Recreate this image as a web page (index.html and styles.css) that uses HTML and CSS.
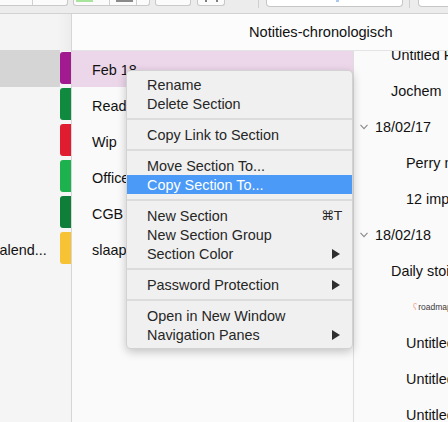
FILE: index.html
```html
<!DOCTYPE html>
<html>
<head>
<meta charset="utf-8">
<link rel="stylesheet" href="styles.css">
</head>
<body>
<div class="window">
  <div class="toolbar">
    <div class="tb-btn b1"><span class="seg s1a"></span><span class="seg s1b"></span></div>
    <div class="tb-btn b2"><span class="seg s2a"><i class="green"></i></span><span class="seg s2b"><i class="grey"></i></span><span class="seg s2c"></span></div>
    <div class="tb-btn b3"></div>
    <div class="tb-btn b4"><i class="dot"></i><i class="dot"></i></div>
    <div class="tb-line l1"></div>
    <div class="tb-field f1"><i class="blue"></i></div>
    <div class="tb-line l2"></div>
    <div class="tb-field f2"></div>
  </div>
  <div class="main">
    <aside class="nav">
      <div class="nav-head"></div>
      <div class="nav-row"><span class="nav-label selected"></span><span class="tab t-magenta"></span></div>
      <div class="nav-row"><span class="nav-label"></span><span class="tab t-green"></span></div>
      <div class="nav-row"><span class="nav-label"></span><span class="tab t-red"></span></div>
      <div class="nav-row"><span class="nav-label"></span><span class="tab t-lime"></span></div>
      <div class="nav-row"><span class="nav-label"></span><span class="tab t-dark"></span></div>
      <div class="nav-row"><span class="nav-label"><span class="nb-name">Kalend...</span></span><span class="tab t-yellow"></span></div>
    </aside>
    <div class="content">
      <div class="title-bar"><span class="title">Notities-chronologisch</span></div>
      <div class="panes">
        <div class="sections">
          <div class="sec-row selected">Feb 18</div>
          <div class="sec-row">Read</div>
          <div class="sec-row">Wip</div>
          <div class="sec-row">Office</div>
          <div class="sec-row">CGB</div>
          <div class="sec-row">slaap</div>
        </div>
        <div class="pages">
          <div class="page-list">
            <div class="page lv1">Untitled Page</div>
            <div class="page lv1">Jochem</div>
            <div class="page grp"><svg class="chev" width="8" height="6" viewBox="0 0 8 6"><path d="M0.5 0.8 L4 4.6 L7.5 0.8" fill="none" stroke="#8a8a8a" stroke-width="1.1"/></svg>18/02/17</div>
            <div class="page lv2">Perry meeting</div>
            <div class="page lv2">12 important things</div>
            <div class="page grp"><svg class="chev" width="8" height="6" viewBox="0 0 8 6"><path d="M0.5 0.8 L4 4.6 L7.5 0.8" fill="none" stroke="#8a8a8a" stroke-width="1.1"/></svg>18/02/18</div>
            <div class="page lv1">Daily stoic</div>
            <div class="page lv3"><span class="mark">ʕ</span>roadmap</div>
            <div class="page lv2">Untitled Page</div>
            <div class="page lv2">Untitled Page</div>
            <div class="page lv2">Untitled Page</div>
          </div>
        </div>
      </div>
    </div>
  </div>

  <div class="menu">
    <div class="item">Rename</div>
    <div class="item">Delete Section</div>
    <div class="sep"></div>
    <div class="item">Copy Link to Section</div>
    <div class="sep"></div>
    <div class="item">Move Section To...</div>
    <div class="item active">Copy Section To...</div>
    <div class="sep"></div>
    <div class="item">New Section<span class="key">⌘T</span></div>
    <div class="item">New Section Group</div>
    <div class="item">Section Color<svg class="arrow" width="8" height="10" viewBox="0 0 8 10"><path d="M0 0 L8 5 L0 10 Z" fill="#2e2e2e"/></svg></div>
    <div class="sep"></div>
    <div class="item">Password Protection<svg class="arrow" width="8" height="10" viewBox="0 0 8 10"><path d="M0 0 L8 5 L0 10 Z" fill="#2e2e2e"/></svg></div>
    <div class="sep"></div>
    <div class="item">Open in New Window</div>
    <div class="item">Navigation Panes<svg class="arrow" width="8" height="10" viewBox="0 0 8 10"><path d="M0 0 L8 5 L0 10 Z" fill="#2e2e2e"/></svg></div>
  </div>
</div>
</body>
</html>
```

FILE: styles.css
```css
* { box-sizing: border-box; }
html, body {
  margin: 0;
  padding: 0;
}
body {
  width: 448px;
  height: 422px;
  overflow: hidden;
  font-family: "Liberation Sans", Arial, sans-serif;
  font-size: 14.4px;
  color: #111;
  background: #fafafa;
}
.window {
  position: relative;
  width: 448px;
  height: 422px;
  display: flex;
  flex-direction: column;
  overflow: hidden;
}

/* toolbar */
.toolbar {
  height: 14px;
  flex: none;
  background: #ececec;
  border-bottom: 1px solid #d2d2d2;
  display: flex;
  align-items: flex-start;
  overflow: hidden;
}
.tb-btn {
  height: 6px;
  background: #fbfbfb;
  border: 1px solid #c9c9c9;
  border-top: none;
  border-radius: 0 0 3px 3px;
  display: flex;
  align-items: flex-start;
  flex: none;
}
.b1 { margin-left: -4px; width: 72px; }
.b2 { margin-left: 5px; width: 77px; }
.b3 { margin-left: 5px; width: 36px; }
.b4 { margin-left: 6px; width: 28px; gap: 9px; padding-left: 7px; }
.seg { height: 5px; display: block; flex: none; }
.s1a { width: 36px; border-right: 1px solid #d0d0d0; }
.s1b { width: 34px; }
.s2a { width: 36px; border-right: 1px solid #d0d0d0; padding-left: 2px; }
.s2b { width: 27px; border-right: 1px solid #d0d0d0; padding-left: 6px; }
.s2c { width: 12px; }
.green { display: block; width: 17px; height: 2px; background: #a7e59c; }
.grey { display: block; width: 17px; height: 2px; background: #8a8a8a; }
.dot { display: block; width: 2px; height: 2px; background: #555; border-radius: 1px; }
.tb-line { width: 1px; height: 8px; background: #cfcfcf; flex: none; }
.l1 { margin-left: 33px; }
.l2 { margin-left: 6px; }
.tb-field {
  height: 7px;
  background: #fff;
  border: 1px solid #c6c6c6;
  border-top: none;
  border-radius: 0 0 4px 4px;
  flex: none;
}
.f1 { margin-left: 7px; width: 137px; padding-left: 69px; }
.f2 { margin-left: 8px; width: 40px; }
.blue { display: block; width: 3px; height: 2px; background: #a9c9ef; }

/* main */
.main {
  flex: 1;
  display: flex;
  min-height: 0;
}
.nav {
  width: 72px;
  flex: none;
  background: #f5f5f5;
  border-right: 1px solid #d6d6d6;
  display: flex;
  flex-direction: column;
}
.nav-head {
  height: 37px;
  flex: none;
  background: linear-gradient(to right, #f4f4f4 80%, #ececec);
}
.nav-row {
  height: 36px;
  display: flex;
  flex: none;
}
.nav-label {
  width: 60px;
  height: 36px;
  display: flex;
  align-items: center;
  overflow: hidden;
  white-space: nowrap;
  padding-top: 2px;
}
.nav-label.selected { background: #d5d5d5; height: 37px; margin-top: -1px; }
.nb-name { margin-left: -10px; color: #111; }
.tab {
  width: 11px;
  height: 32px;
  margin-top: 1px;
  border-radius: 3px 0 0 3px;
}
.t-magenta { background: #a11a90; }
.t-green { background: #0f8a3e; }
.t-red { background: #e01d30; }
.t-lime { background: #1db24e; }
.t-dark { background: #0e7e39; }
.t-yellow { background: #f7c233; }

.content {
  flex: 1;
  display: flex;
  flex-direction: column;
  min-width: 0;
}
.title-bar {
  height: 37px;
  flex: none;
  background: #fcfcfc;
  border-bottom: 1px solid #e4e4e4;
  display: flex;
  align-items: center;
  padding-left: 177px;
  padding-bottom: 1px;
  position: relative;
  z-index: 1;
}
.title { color: #111; white-space: nowrap; font-size: 14.6px; }
.panes {
  flex: 1;
  display: flex;
  min-height: 0;
}
.sections {
  width: 282px;
  flex: none;
  background: #fafafa;
  border-right: 1px solid #dedede;
}
.sec-row {
  height: 36px;
  display: flex;
  align-items: center;
  padding-left: 20px;
  padding-top: 2px;
  color: #111;
}
.sec-row.selected { background: #ecd6ea; height: 37px; margin-top: -1px; padding-top: 3px; }
.pages {
  flex: 1;
  overflow: hidden;
  background: #fafafa;
}
.page-list { margin-top: -15px; }
.page {
  height: 36px;
  display: flex;
  align-items: center;
  white-space: nowrap;
  color: #111;
  padding-top: 1px;
}
.lv1 { padding-left: 37px; }
.lv2 { padding-left: 52px; }
.lv3 { padding-left: 59px; font-size: 8.5px; color: #3a3a3a; }
.grp { padding-left: 6px; }
.chev { margin-right: 7px; flex: none; }
.mark { color: #f0a58a; margin-right: 1px; font-size: 8.5px; }

/* context menu */
.menu {
  position: absolute;
  left: 126px;
  top: 70px;
  width: 227px;
  padding: 4px 0;
  background: #f0f0f0;
  border: 1px solid rgba(0,0,0,0.12);
  border-radius: 5px;
  box-shadow: 0 3px 10px rgba(0,0,0,0.22);
  color: #262626;
  z-index: 5;
}
.item {
  height: 19px;
  display: flex;
  align-items: center;
  padding-left: 20px;
  padding-right: 12px;
  white-space: nowrap;
}
.item.active { background: #4b9af8; color: #fff; }
.key { margin-left: auto; margin-right: -2px; font-family: "DejaVu Sans", sans-serif; font-size: 13px; color: #262626; }
.arrow { margin-left: auto; flex: none; }
.sep {
  height: 12px;
  display: flex;
  align-items: center;
}
.sep::before {
  content: "";
  display: block;
  width: 100%;
  height: 2px;
  background: #dcdcdc;
}
```
